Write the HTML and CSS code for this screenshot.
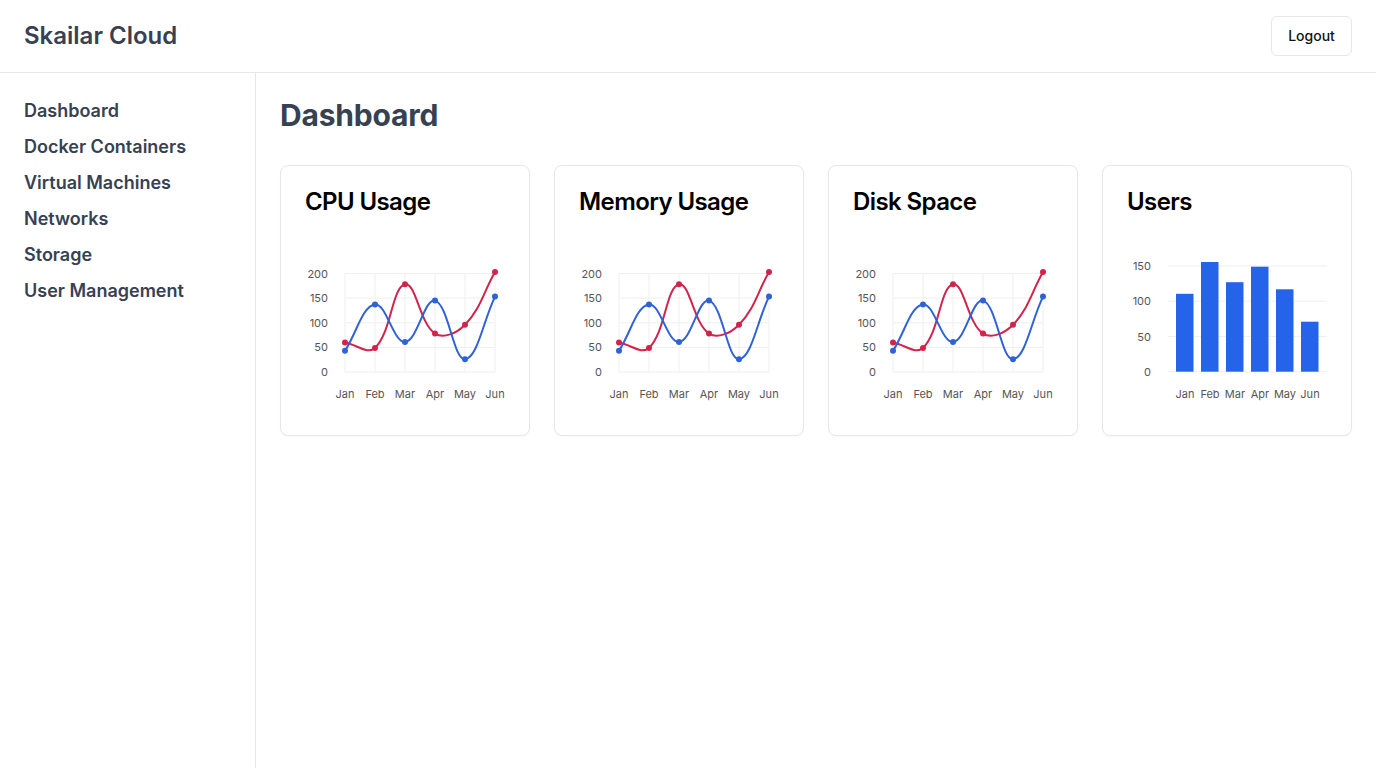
FILE: index.html
```html
<!DOCTYPE html>
<html lang="en">
<head>
<meta charset="utf-8">
<title>Skailar Cloud</title>
<link rel="stylesheet" href="styles.css">
</head>
<body>
<header class="topbar">
  <div class="brand">Skailar Cloud</div>
  <button class="logout">Logout</button>
</header>
<div class="layout">
  <aside class="sidebar">
    <nav class="nav">
      <a href="#">Dashboard</a>
      <a href="#">Docker Containers</a>
      <a href="#">Virtual Machines</a>
      <a href="#">Networks</a>
      <a href="#">Storage</a>
      <a href="#">User Management</a>
    </nav>
  </aside>
  <main class="main">
    <h1 class="page-title">Dashboard</h1>
    <div class="cards">
      <section class="card">
        <h2 class="card-title">CPU Usage</h2>
        <svg class="chart" viewBox="305 214 200 197" width="200" height="197">
          <g class="grid">
            <line x1="345" y1="273.5" x2="345" y2="372"/><line x1="375" y1="273.5" x2="375" y2="372"/><line x1="405" y1="273.5" x2="405" y2="372"/><line x1="435" y1="273.5" x2="435" y2="372"/><line x1="465" y1="273.5" x2="465" y2="372"/><line x1="495" y1="273.5" x2="495" y2="372"/>
            <line x1="345" y1="273.5" x2="495" y2="273.5"/><line x1="345" y1="298.1" x2="495" y2="298.1"/><line x1="345" y1="322.8" x2="495" y2="322.8"/><line x1="345" y1="347.4" x2="495" y2="347.4"/><line x1="345" y1="372" x2="495" y2="372"/>
          </g>
          <g class="ylab">
            <text x="328" y="277.5">200</text><text x="328" y="302.1">150</text><text x="328" y="326.8">100</text><text x="328" y="351.4">50</text><text x="328" y="376">0</text>
          </g>
          <g class="xlab">
            <text x="345" y="398">Jan</text><text x="375" y="398">Feb</text><text x="405" y="398">Mar</text><text x="435" y="398">Apr</text><text x="465" y="398">May</text><text x="495" y="398">Jun</text>
          </g>
          <path class="line red" d="M345,342.5 C357,344.66 367.74,354.94 375,347.9 C391.74,331.66 391.82,287.44 405,284.3 C415.82,281.72 419.44,323.12 435,333.6 C443.44,339.28 456.83,333.09 465,324.7 C480.83,308.45 483,293.08 495,272"/>
          <path class="line blue" d="M345,350.8 C357,332.28 362.17,306.38 375,304.5 C386.17,302.86 393.38,342.76 405,342 C417.38,341.2 424.51,297.59 435,300.6 C448.51,304.47 453.32,359.98 465,359.2 C477.32,358.38 483,321.64 495,296.6"/>
          <g class="dots-red"><circle cx="345" cy="342.5" r="3"/><circle cx="375" cy="347.9" r="3"/><circle cx="405" cy="284.3" r="3"/><circle cx="435" cy="333.6" r="3"/><circle cx="465" cy="324.7" r="3"/><circle cx="495" cy="272" r="3"/></g>
          <g class="dots-blue"><circle cx="345" cy="350.8" r="3"/><circle cx="375" cy="304.5" r="3"/><circle cx="405" cy="342" r="3"/><circle cx="435" cy="300.6" r="3"/><circle cx="465" cy="359.2" r="3"/><circle cx="495" cy="296.6" r="3"/></g>
        </svg>
      </section>
      <section class="card">
        <h2 class="card-title">Memory Usage</h2>
        <svg class="chart" viewBox="305 214 200 197" width="200" height="197">
          <g class="grid">
            <line x1="345" y1="273.5" x2="345" y2="372"/><line x1="375" y1="273.5" x2="375" y2="372"/><line x1="405" y1="273.5" x2="405" y2="372"/><line x1="435" y1="273.5" x2="435" y2="372"/><line x1="465" y1="273.5" x2="465" y2="372"/><line x1="495" y1="273.5" x2="495" y2="372"/>
            <line x1="345" y1="273.5" x2="495" y2="273.5"/><line x1="345" y1="298.1" x2="495" y2="298.1"/><line x1="345" y1="322.8" x2="495" y2="322.8"/><line x1="345" y1="347.4" x2="495" y2="347.4"/><line x1="345" y1="372" x2="495" y2="372"/>
          </g>
          <g class="ylab">
            <text x="328" y="277.5">200</text><text x="328" y="302.1">150</text><text x="328" y="326.8">100</text><text x="328" y="351.4">50</text><text x="328" y="376">0</text>
          </g>
          <g class="xlab">
            <text x="345" y="398">Jan</text><text x="375" y="398">Feb</text><text x="405" y="398">Mar</text><text x="435" y="398">Apr</text><text x="465" y="398">May</text><text x="495" y="398">Jun</text>
          </g>
          <path class="line red" d="M345,342.5 C357,344.66 367.74,354.94 375,347.9 C391.74,331.66 391.82,287.44 405,284.3 C415.82,281.72 419.44,323.12 435,333.6 C443.44,339.28 456.83,333.09 465,324.7 C480.83,308.45 483,293.08 495,272"/>
          <path class="line blue" d="M345,350.8 C357,332.28 362.17,306.38 375,304.5 C386.17,302.86 393.38,342.76 405,342 C417.38,341.2 424.51,297.59 435,300.6 C448.51,304.47 453.32,359.98 465,359.2 C477.32,358.38 483,321.64 495,296.6"/>
          <g class="dots-red"><circle cx="345" cy="342.5" r="3"/><circle cx="375" cy="347.9" r="3"/><circle cx="405" cy="284.3" r="3"/><circle cx="435" cy="333.6" r="3"/><circle cx="465" cy="324.7" r="3"/><circle cx="495" cy="272" r="3"/></g>
          <g class="dots-blue"><circle cx="345" cy="350.8" r="3"/><circle cx="375" cy="304.5" r="3"/><circle cx="405" cy="342" r="3"/><circle cx="435" cy="300.6" r="3"/><circle cx="465" cy="359.2" r="3"/><circle cx="495" cy="296.6" r="3"/></g>
        </svg>
      </section>
      <section class="card">
        <h2 class="card-title">Disk Space</h2>
        <svg class="chart" viewBox="305 214 200 197" width="200" height="197">
          <g class="grid">
            <line x1="345" y1="273.5" x2="345" y2="372"/><line x1="375" y1="273.5" x2="375" y2="372"/><line x1="405" y1="273.5" x2="405" y2="372"/><line x1="435" y1="273.5" x2="435" y2="372"/><line x1="465" y1="273.5" x2="465" y2="372"/><line x1="495" y1="273.5" x2="495" y2="372"/>
            <line x1="345" y1="273.5" x2="495" y2="273.5"/><line x1="345" y1="298.1" x2="495" y2="298.1"/><line x1="345" y1="322.8" x2="495" y2="322.8"/><line x1="345" y1="347.4" x2="495" y2="347.4"/><line x1="345" y1="372" x2="495" y2="372"/>
          </g>
          <g class="ylab">
            <text x="328" y="277.5">200</text><text x="328" y="302.1">150</text><text x="328" y="326.8">100</text><text x="328" y="351.4">50</text><text x="328" y="376">0</text>
          </g>
          <g class="xlab">
            <text x="345" y="398">Jan</text><text x="375" y="398">Feb</text><text x="405" y="398">Mar</text><text x="435" y="398">Apr</text><text x="465" y="398">May</text><text x="495" y="398">Jun</text>
          </g>
          <path class="line red" d="M345,342.5 C357,344.66 367.74,354.94 375,347.9 C391.74,331.66 391.82,287.44 405,284.3 C415.82,281.72 419.44,323.12 435,333.6 C443.44,339.28 456.83,333.09 465,324.7 C480.83,308.45 483,293.08 495,272"/>
          <path class="line blue" d="M345,350.8 C357,332.28 362.17,306.38 375,304.5 C386.17,302.86 393.38,342.76 405,342 C417.38,341.2 424.51,297.59 435,300.6 C448.51,304.47 453.32,359.98 465,359.2 C477.32,358.38 483,321.64 495,296.6"/>
          <g class="dots-red"><circle cx="345" cy="342.5" r="3"/><circle cx="375" cy="347.9" r="3"/><circle cx="405" cy="284.3" r="3"/><circle cx="435" cy="333.6" r="3"/><circle cx="465" cy="324.7" r="3"/><circle cx="495" cy="272" r="3"/></g>
          <g class="dots-blue"><circle cx="345" cy="350.8" r="3"/><circle cx="375" cy="304.5" r="3"/><circle cx="405" cy="342" r="3"/><circle cx="435" cy="300.6" r="3"/><circle cx="465" cy="359.2" r="3"/><circle cx="495" cy="296.6" r="3"/></g>
        </svg>
      </section>
      <section class="card">
        <h2 class="card-title">Users</h2>
        <svg class="chart" viewBox="1127 214 200 197" width="200" height="197">
          <g class="grid">
            <line x1="1168" y1="266" x2="1327" y2="266"/><line x1="1168" y1="301.2" x2="1327" y2="301.2"/><line x1="1168" y1="336.5" x2="1327" y2="336.5"/><line x1="1168" y1="371.7" x2="1327" y2="371.7"/>
          </g>
          <g class="ylab">
            <text x="1151" y="270">150</text><text x="1151" y="305.2">100</text><text x="1151" y="340.5">50</text><text x="1151" y="375.7">0</text>
          </g>
          <g class="xlab">
            <text x="1185" y="398">Jan</text><text x="1210" y="398">Feb</text><text x="1235" y="398">Mar</text><text x="1260" y="398">Apr</text><text x="1285" y="398">May</text><text x="1310" y="398">Jun</text>
          </g>
          <g class="bars">
            <rect x="1176" y="293.8" width="17.5" height="77.9"/>
            <rect x="1201" y="262" width="17.5" height="109.7"/>
            <rect x="1226" y="282.2" width="17.5" height="89.5"/>
            <rect x="1251" y="266.7" width="17.5" height="105"/>
            <rect x="1276" y="289.3" width="17.5" height="82.4"/>
            <rect x="1301" y="321.7" width="17.5" height="50"/>
          </g>
        </svg>
      </section>
    </div>
  </main>
</div>
</body>
</html>
```

FILE: styles.css
```css
* { box-sizing: border-box; }

html, body {
  margin: 0;
  padding: 0;
  background: #ffffff;
  font-family: Inter, "Noto Sans", "Liberation Sans", sans-serif;
  color: #374151;
}

body {
  height: 768px;
  display: flex;
  flex-direction: column;
  overflow: hidden;
}

.topbar {
  display: flex;
  align-items: center;
  justify-content: space-between;
  height: 73px;
  padding: 16px 24px;
  border-bottom: 1px solid #e5e7eb;
  flex: none;
}

.brand {
  font-size: 24px;
  font-weight: 600;
  line-height: 32px;
  color: #374151;
}

.logout {
  width: 81px;
  height: 40px;
  border: 1px solid #e5e7eb;
  border-radius: 6px;
  background: #ffffff;
  font-family: Inter, "Noto Sans", sans-serif;
  font-size: 14px;
  font-weight: 500;
  line-height: 38px;
  color: #111111;
  cursor: pointer;
  padding: 0 0 1px;
}

.layout {
  display: flex;
  flex: 1;
  min-height: 0;
}

.sidebar {
  width: 256px;
  flex: none;
  border-right: 1px solid #e5e7eb;
  padding: 24px 24px;
}

.nav {
  display: flex;
  flex-direction: column;
  gap: 8px;
}

.nav a {
  font-size: 18px;
  font-weight: 600;
  line-height: 28px;
  color: #374151;
  text-decoration: none;
}

.main {
  flex: 1;
  padding: 24px;
}

.page-title {
  margin: 0 0 32px;
  font-size: 30px;
  font-weight: 700;
  line-height: 36px;
  letter-spacing: -0.2px;
  color: #374151;
}

.cards {
  display: grid;
  grid-template-columns: repeat(4, 1fr);
  gap: 24px;
}

.card {
  border: 1px solid #e5e7eb;
  border-radius: 8px;
  background: #ffffff;
  padding: 24px;
  box-shadow: 0 1px 2px rgba(0, 0, 0, 0.03);
}

.card-title {
  margin: 0;
  font-size: 24px;
  font-weight: 600;
  line-height: 24px;
  letter-spacing: -0.025em;
  color: #000000;
}

.chart {
  display: block;
  width: 200px;
  height: 197px;
}

.grid line {
  stroke: #efefef;
  stroke-width: 1;
}

.ylab text {
  font-family: Inter, "Noto Sans", sans-serif;
  font-size: 11px;
  fill: #555555;
  text-anchor: end;
}

.xlab text {
  font-family: Inter, "Noto Sans", sans-serif;
  font-size: 11px;
  fill: #555555;
  text-anchor: middle;
}

.line {
  fill: none;
  stroke-width: 2;
}

.line.red { stroke: #d1244c; }
.line.blue { stroke: #2f62d6; }

.dots-red circle { fill: #d1244c; }
.dots-blue circle { fill: #2f62d6; }

.bars rect { fill: #2563eb; }
```
